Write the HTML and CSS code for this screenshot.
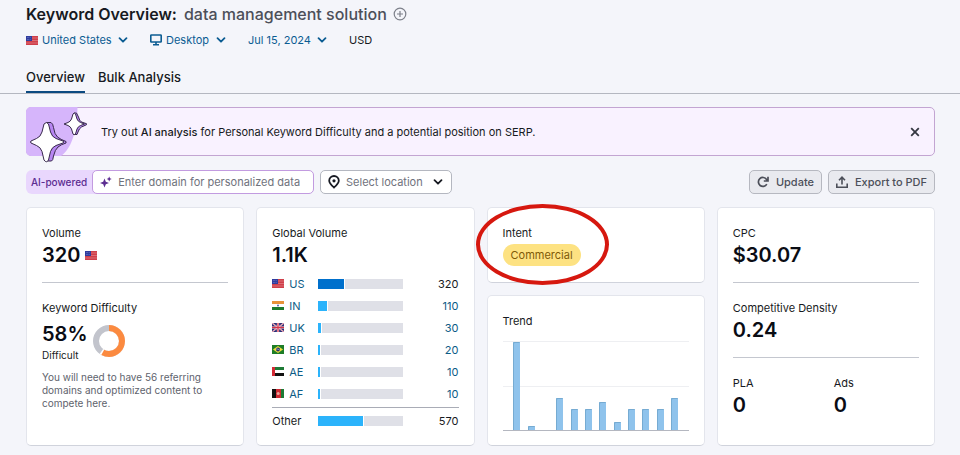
FILE: index.html
```
<!DOCTYPE html>
<html lang="en">
<head>
    <meta charset="UTF-8">
    <meta name="viewport" content="width=device-width, initial-scale=1.0">
    <title>Keyword Overview: data management solution</title>
    <link rel="stylesheet" href="styles.css">
</head>
<body>
    <!-- Shared symbols -->
    <svg class="symbols" aria-hidden="true">
        <symbol id="chevron" viewBox="0 0 10 10">
            <path d="M1.5 3.2 5 6.7 8.5 3.2" fill="none" stroke="currentColor" stroke-width="1.8" stroke-linecap="round" stroke-linejoin="round"/>
        </symbol>
        <symbol id="flag-us" viewBox="0 0 12 9">
            <rect width="12" height="9" fill="#cf3f4a"/>
            <path d="M0 2h12M0 4.5h12M0 7h12" stroke="#e07a80" stroke-width=".8"/>
            <rect width="6" height="5" fill="#2f3c9e"/>
            <path d="M1 1.5h4M1 3.5h4" stroke="#8f98d8" stroke-width=".6" stroke-dasharray=".7 .7"/>
        </symbol>
        <symbol id="flag-in" viewBox="0 0 12 9">
            <rect width="12" height="9" fill="#fff"/>
            <rect width="12" height="3" fill="#e8933a"/>
            <rect y="6" width="12" height="3" fill="#1c7a2c"/>
            <circle cx="6" cy="4.5" r="1" fill="#5560a8"/>
        </symbol>
        <symbol id="flag-uk" viewBox="0 0 12 9">
            <rect width="12" height="9" fill="#2b2f78"/>
            <path d="M0 0 12 9M12 0 0 9" stroke="#fff" stroke-width="1.2"/>
            <path d="M0 0 12 9M12 0 0 9" stroke="#d4334a" stroke-width=".6"/>
            <path d="M6 0v9M0 4.5h12" stroke="#fff" stroke-width="2.2"/>
            <path d="M6 0v9M0 4.5h12" stroke="#d4334a" stroke-width="1.3"/>
        </symbol>
        <symbol id="flag-br" viewBox="0 0 12 9">
            <rect width="12" height="9" fill="#1d7d27"/>
            <path d="M6 1 11 4.5 6 8 1 4.5z" fill="#f0dc3c"/>
            <circle cx="6" cy="4.5" r="2" fill="#20306c"/>
            <path d="M4.2 4q2-.3 3.5 1.1" fill="none" stroke="#fff" stroke-width=".5"/>
        </symbol>
        <symbol id="flag-ae" viewBox="0 0 12 9">
            <rect width="12" height="9" fill="#fff"/>
            <rect width="12" height="3" fill="#1d7a35"/>
            <rect y="6" width="12" height="3" fill="#111"/>
            <rect width="3" height="9" fill="#d32a35"/>
        </symbol>
        <symbol id="flag-af" viewBox="0 0 12 9">
            <rect width="4" height="9" fill="#111"/>
            <rect x="4" width="5" height="9" fill="#cf2a32"/>
            <rect x="9" width="3" height="9" fill="#1d7a35"/>
            <circle cx="6.2" cy="4.5" r="1.5" fill="#eba79c"/>
        </symbol>
    </svg>

    <header class="page-header">
        <div class="title-row">
            <h1>Keyword Overview: <span class="keyword">data management solution</span></h1>
            <button class="add-keyword" type="button" aria-label="Add keyword">
                <svg width="14" height="14" viewBox="0 0 14 14" fill="none" stroke="currentColor" stroke-width="1.2"><circle cx="7" cy="7" r="5.8"/><path d="M7 4v6M4 7h6"/></svg>
            </button>
        </div>

        <div class="filters">
            <div class="filter">
                <svg class="flag" aria-hidden="true"><use href="#flag-us"/></svg>
                <select aria-label="Country"><option>United States</option></select>
                <svg class="chevron" aria-hidden="true"><use href="#chevron"/></svg>
            </div>
            <div class="filter">
                <svg width="12" height="12" viewBox="0 0 12 12" fill="none" stroke="currentColor" stroke-width="1.6" aria-hidden="true"><rect x=".8" y="1" width="10.4" height="7" rx=".6"/><path d="M6 8v2M3 10.8h6"/></svg>
                <select aria-label="Device"><option>Desktop</option></select>
                <svg class="chevron" aria-hidden="true"><use href="#chevron"/></svg>
            </div>
            <div class="filter">
                <select aria-label="Date"><option>Jul 15, 2024</option></select>
                <svg class="chevron" aria-hidden="true"><use href="#chevron"/></svg>
            </div>
            <span>USD</span>
        </div>

        <nav class="tabs">
            <a class="tab active" href="#overview">Overview</a>
            <a class="tab" href="#bulk">Bulk Analysis</a>
        </nav>
    </header>

    <main id="overview">
        <!-- AI banner -->
        <section class="banner">
            <svg class="banner-art" width="64" height="56" viewBox="0 0 64 56" aria-hidden="true">
                <path d="M0 5a5 5 0 0 1 5-5h46.500C51 21 47 40 35 49H5a5 5 0 0 1-5-5z" fill="#d6b5fb"/>
                <g stroke="#382a4c" stroke-width="1" stroke-linejoin="round">
                    <path d="M20.500 15.500h4.500q2 1 2.500 5 1 7 4 9.500t8.500 4.500v1.500q-5 1.500-8 4t-4.500 9q-.5 4.500-2 5h-4.500z" fill="#b785f2"/>
                    <path d="M18 17q2.500-3 4.500 0l2 8q1.500 5 5.500 6.500l7 2.500q1.500 1 0 2l-7 2.500q-4 1.500-5.500 6l-2 8.500q-2 3.500-4.500 0l-2-8.500q-1.500-4.500-5.500-6l-5.500-2.500q-1-1 0-2l5.500-2.500q4-1.500 5.500-6.500z" fill="#fff"/>
                    <path d="M48 6h2.500l2 4q1 4 3 5l5 1.700v1l-5 2.300q-2.500 1.500-3.500 5l-1 2.500h-3.500z" fill="#b785f2"/>
                    <path d="M47 7q1-2 2.500 0l1.500 5q1 2.500 3.500 3.500l4 1.500-4 1.500q-2.500 1-3.500 3.500l-1.500 5q-1.500 1.500-2.500 0l-1.500-5q-1-2.500-3.500-3.500l-4-1.500 4-1.500q2.500-1 3.500-3.500z" fill="#fff"/>
                </g>
            </svg>
            <p>Try out <strong>AI analysis</strong> for Personal Keyword Difficulty and a potential position on SERP.</p>
            <button class="close" type="button" aria-label="Close">
                <svg width="10" height="10" viewBox="0 0 10 10" fill="none" stroke="currentColor" stroke-width="1.8"><path d="m1.200 1.200 7.600 7.600m0-7.600-7.600 7.600"/></svg>
            </button>
        </section>

        <!-- Toolbar -->
        <div class="toolbar">
            <div class="ai-field">
                <label for="domain">AI-powered</label>
                <div class="ai-input">
                    <svg width="12" height="12" viewBox="0 0 12 12" fill="#5c2d91" aria-hidden="true"><path d="M4.500 2.500 5.800 5.700 9 7 5.800 8.300 4.500 11.500 3.200 8.300 0 7l3.200-1.300zM9.200.5l.8 1.700 1.700.8-1.700.8-.8 1.700-.8-1.700L6.700 3l1.700-.8z"/></svg>
                    <input type="text" id="domain" placeholder="Enter domain for personalized data">
                </div>
            </div>
            <div class="location">
                <svg width="12" height="14" viewBox="0 0 12 14" fill="none" stroke="currentColor" stroke-width="1.800" aria-hidden="true"><path d="M6 12.500C3.500 10.400 1.200 8.500 1.200 5.800a4.800 4.800 0 0 1 9.600 0c0 2.700-2.300 4.600-4.800 6.700z"/><circle cx="6" cy="5.800" r="1.600" fill="currentColor" stroke="none"/></svg>
                <select aria-label="Location"><option>Select location</option></select>
                <svg class="chevron" aria-hidden="true"><use href="#chevron"/></svg>
            </div>
            <div class="actions">
                <button class="btn" type="button">
                    <svg width="12" height="12" viewBox="0 0 12 12" fill="none" stroke="currentColor" stroke-width="1.700" aria-hidden="true"><path d="M9.800 8.200A4.500 4.500 0 1 1 9.600 3.400L10.800 4.800M11 .8v4.200H6.800"/></svg>
                    Update
                </button>
                <button class="btn" type="button">
                    <svg width="12" height="12" viewBox="0 0 12 12" fill="none" stroke="currentColor" stroke-width="1.600" aria-hidden="true"><path d="M.8 7.500v3.700h10.400V7.500M6 8.500V1.500M3 4.200l3-3 3 3"/></svg>
                    Export to PDF
                </button>
            </div>
        </div>

        <!-- Metric cards -->
        <div class="cards">
            <section class="card">
                <div class="metric">
                    <h2>Volume</h2>
                    <p class="value">320 <svg class="flag" aria-hidden="true"><use href="#flag-us"/></svg></p>
                </div>
                <div class="metric">
                    <h2>Keyword Difficulty</h2>
                    <div class="difficulty">
                        <div>
                            <p class="value">58%</p>
                            <p class="level">Difficult</p>
                        </div>
                        <svg width="34" height="34" viewBox="0 0 34 34" fill="none" stroke-width="6" aria-hidden="true">
                            <circle cx="17" cy="17" r="13" stroke="#c2c4cc"/>
                            <circle cx="17" cy="17" r="13" stroke="#fff" pathLength="100" stroke-dasharray="60 40" transform="rotate(-90 17 17)"/>
                            <circle cx="17" cy="17" r="13" stroke="#fb8a40" pathLength="100" stroke-dasharray="58 42" transform="rotate(-90 17 17)"/>
                        </svg>
                    </div>
                    <p class="note">You will need to have 56 referring domains and optimized content to compete here.</p>
                </div>
            </section>

            <section class="card">
                <h2>Global Volume</h2>
                <p class="value">1.1K</p>
                <table class="countries">
                    <tbody>
                        <tr class="current">
                            <th scope="row"><svg class="flag" aria-hidden="true"><use href="#flag-us"/></svg><a href="#us">US</a></th>
                            <td><div class="bar"><div class="fill" style="width: 30%"></div></div></td>
                            <td class="num">320</td>
                        </tr>
                        <tr>
                            <th scope="row"><svg class="flag" aria-hidden="true"><use href="#flag-in"/></svg><a href="#in">IN</a></th>
                            <td><div class="bar"><div class="fill" style="width: 10%"></div></div></td>
                            <td class="num"><a href="#in">110</a></td>
                        </tr>
                        <tr>
                            <th scope="row"><svg class="flag" aria-hidden="true"><use href="#flag-uk"/></svg><a href="#uk">UK</a></th>
                            <td><div class="bar"><div class="fill" style="width: 3%"></div></div></td>
                            <td class="num"><a href="#uk">30</a></td>
                        </tr>
                        <tr>
                            <th scope="row"><svg class="flag" aria-hidden="true"><use href="#flag-br"/></svg><a href="#br">BR</a></th>
                            <td><div class="bar"><div class="fill" style="width: 2%"></div></div></td>
                            <td class="num"><a href="#br">20</a></td>
                        </tr>
                        <tr>
                            <th scope="row"><svg class="flag" aria-hidden="true"><use href="#flag-ae"/></svg><a href="#ae">AE</a></th>
                            <td><div class="bar"><div class="fill" style="width: 1%"></div></div></td>
                            <td class="num"><a href="#ae">10</a></td>
                        </tr>
                        <tr>
                            <th scope="row"><svg class="flag" aria-hidden="true"><use href="#flag-af"/></svg><a href="#af">AF</a></th>
                            <td><div class="bar"><div class="fill" style="width: 1%"></div></div></td>
                            <td class="num"><a href="#af">10</a></td>
                        </tr>
                    </tbody>
                    <tfoot>
                        <tr>
                            <th scope="row">Other</th>
                            <td><div class="bar"><div class="fill" style="width: 53%"></div></div></td>
                            <td class="num">570</td>
                        </tr>
                    </tfoot>
                </table>
            </section>

            <div class="card-stack">
                <section class="card intent">
                    <h2>Intent</h2>
                    <span class="badge">Commercial</span>
                    <div class="highlight"></div>
                </section>
                <section class="card trend">
                    <h2>Trend</h2>
                    <div class="chart">
                        <div class="month" style="height: 100%"></div>
                        <div class="month" style="height: 5%"></div>
                        <div class="month" style="height: 0%"></div>
                        <div class="month" style="height: 36%"></div>
                        <div class="month" style="height: 24%"></div>
                        <div class="month" style="height: 24%"></div>
                        <div class="month" style="height: 32%"></div>
                        <div class="month" style="height: 9%"></div>
                        <div class="month" style="height: 24%"></div>
                        <div class="month" style="height: 24%"></div>
                        <div class="month" style="height: 24%"></div>
                        <div class="month" style="height: 36%"></div>
                    </div>
                </section>
            </div>

            <section class="card">
                <div class="metric">
                    <h2>CPC</h2>
                    <p class="value">$30.07</p>
                </div>
                <div class="metric">
                    <h2>Competitive Density</h2>
                    <p class="value">0.24</p>
                </div>
                <div class="metric split">
                    <div>
                        <h2>PLA</h2>
                        <p class="value">0</p>
                    </div>
                    <div>
                        <h2>Ads</h2>
                        <p class="value">0</p>
                    </div>
                </div>
            </section>
        </div>
    </main>
</body>
</html>
```
FILE: styles.css
```
* {
    box-sizing: border-box;
}

body {
    margin: 0;
    font-family: Inter, "Liberation Sans", sans-serif;
    font-size: 11px;
    line-height: 16px;
    color: #171a22;
    background-color: #f4f5fa;
}

h1,
h2,
p {
    margin: 0;
}

a {
    color: #0b5c86;
    text-decoration: none;
}

button,
input,
select {
    font: inherit;
    color: inherit;
}

svg {
    display: block;
    flex: none;
}

.symbols {
    position: absolute;
    width: 0;
    height: 0;
}

.flag {
    width: 12px;
    height: 9px;
}

.chevron {
    width: 10px;
    height: 10px;
    margin-left: -16px;
    pointer-events: none;
}

select {
    appearance: none;
    border: none;
    background: none;
    padding: 0 18px 0 0;
    cursor: pointer;
}

/* Header */
.page-header {
    padding: 4px 26px 0;
    border-bottom: 1px solid #b4b7c0;
}

.title-row {
    display: flex;
    align-items: center;
    gap: 6px;
}

h1 {
    font-size: 16px;
    line-height: 20px;
    font-weight: 600;
}

.keyword {
    margin-left: 3px;
    font-weight: 500;
    color: #4c4f59;
}

.add-keyword {
    border: none;
    background: none;
    padding: 0;
    color: #7d808a;
}

.filters {
    display: flex;
    gap: 22px;
    margin-top: 8px;
}

.filter {
    display: flex;
    align-items: center;
    gap: 4px;
    color: #0b5c92;
}

.tabs {
    display: flex;
    gap: 13px;
    margin-top: 21px;
}

.tab {
    padding-bottom: 8px;
    font-size: 13px;
    font-weight: 500;
    color: #171a22;
}

.tab.active {
    padding-bottom: 6px;
    border-bottom: 2px solid #0b4a80;
}

main {
    padding: 13px 25px 8px 26px;
}

/* Banner */
.banner {
    position: relative;
    display: flex;
    align-items: center;
    height: 49px;
    padding: 0 14px 0 74px;
    border: 1px solid #c3a5d2;
    border-radius: 5px;
    background-color: #f9f2ff;
}

.banner-art {
    position: absolute;
    top: -1px;
    left: -1px;
}

.banner p {
    flex: 1;
}

.banner strong {
    font-weight: 500;
}

.close {
    border: none;
    background: none;
    padding: 0;
    color: #353842;
}

/* Toolbar */
.toolbar {
    display: flex;
    align-items: center;
    gap: 6px;
    margin-top: 14px;
}

.ai-field {
    display: flex;
    align-items: center;
    width: 288px;
    border-radius: 6px;
    background-color: #e9d7fd;
}

.ai-field label {
    padding: 0 5px;
    font-size: 10px;
    font-weight: 500;
    color: #5c2d91;
}

.ai-input {
    display: flex;
    flex: 1;
    align-items: center;
    gap: 6px;
    min-width: 0;
    height: 24px;
    padding: 0 7px;
    border: 1px solid #c29be0;
    border-radius: 5px;
    background-color: #fff;
}

.ai-input input {
    flex: 1;
    min-width: 0;
    padding: 0;
    border: none;
    background: none;
    outline: none;
}

.ai-input input::placeholder {
    color: #6f727c;
    opacity: 1;
}

.location {
    display: flex;
    align-items: center;
    gap: 6px;
    height: 24px;
    padding: 0 8px 0 7px;
    border: 1px solid #b4b7c0;
    border-radius: 5px;
    background-color: #fff;
}

.location select {
    padding-right: 20px;
    color: #6f727c;
}

.actions {
    display: flex;
    gap: 6px;
    margin-left: auto;
}

.btn {
    display: flex;
    align-items: center;
    gap: 7px;
    height: 24px;
    padding: 0 7px;
    border: 1px solid #b6b8c0;
    border-radius: 5px;
    background-color: #e9eaef;
    font-weight: 500;
    color: #4c4f59;
}

/* Cards */
.cards {
    display: grid;
    grid-template-columns: repeat(4, 1fr);
    gap: 12px;
    margin-top: 13px;
}

.card {
    padding: 17px 15px 10px;
    border: 1px solid #e3e5ec;
    border-bottom-color: #d0d3dc;
    border-radius: 5px;
    background-color: #fff;
}

.card h2 {
    font-size: 11px;
    font-weight: 400;
}

.value {
    display: flex;
    align-items: center;
    gap: 5px;
    font-size: 20px;
    line-height: 28px;
    font-weight: 600;
    color: #0a0c14;
}

.metric + .metric {
    margin-top: 13px;
    padding-top: 17px;
    border-top: 1px solid #c4c7cf;
}

.split {
    display: grid;
    grid-template-columns: 101px 1fr;
}

.difficulty {
    display: flex;
    align-items: center;
    gap: 5px;
    margin-top: 4px;
}

.level {
    font-size: 10px;
    line-height: 14px;
}

.note {
    margin-top: 9px;
    font-size: 10px;
    line-height: 13px;
    color: #60636d;
}

.countries {
    width: 100%;
    margin-top: 4px;
    border-collapse: collapse;
}

.countries th,
.countries td {
    height: 22px;
    padding: 0;
    text-align: left;
    font-weight: 400;
}

.countries th {
    width: 46px;
}

.countries tbody tr:last-child > * {
    height: 24px;
    padding-bottom: 2px;
}

.countries .flag {
    display: inline-block;
    margin-right: 5px;
}

.countries .num {
    text-align: right;
}

.countries tfoot th,
.countries tfoot td {
    height: 28px;
    border-top: 1px solid #a9acb6;
}

.bar {
    width: 85px;
    height: 10px;
    background-color: #dfe0e7;
}

.fill {
    min-width: 2px;
    height: 10px;
    background-color: #2bb3fb;
    box-shadow: 1px 0 #fff;
}

.current .fill {
    background-color: #0070cc;
}

.card-stack {
    display: flex;
    flex-direction: column;
    gap: 12px;
}

.intent {
    position: relative;
    padding-bottom: 16px;
}

.badge {
    display: inline-block;
    margin-top: 3px;
    padding: 3px 8px;
    border-radius: 11px;
    background-color: #fde282;
    color: #7f5a08;
}

/* Marker circle drawn over the intent card */
.highlight {
    position: absolute;
    top: -4px;
    left: -12px;
    width: 133px;
    height: 81px;
    border: 4px solid #d6180f;
    border-radius: 50%;
    pointer-events: none;
}

.trend {
    flex: 1;
}

.chart {
    display: flex;
    align-items: flex-end;
    justify-content: space-around;
    height: 90px;
    margin-top: 12px;
    padding: 0 7px;
    border-top: 1px solid #eeeff2;
    border-bottom: 1px solid #b4b7c0;
    background: linear-gradient(#eeeff2, #eeeff2) center / 100% 1px no-repeat;
}

.month {
    width: 7px;
    border-radius: 1px 1px 0 0;
    background-color: #8fc3ec;
    box-shadow: inset 1px 1px #76abd2;
}
```
